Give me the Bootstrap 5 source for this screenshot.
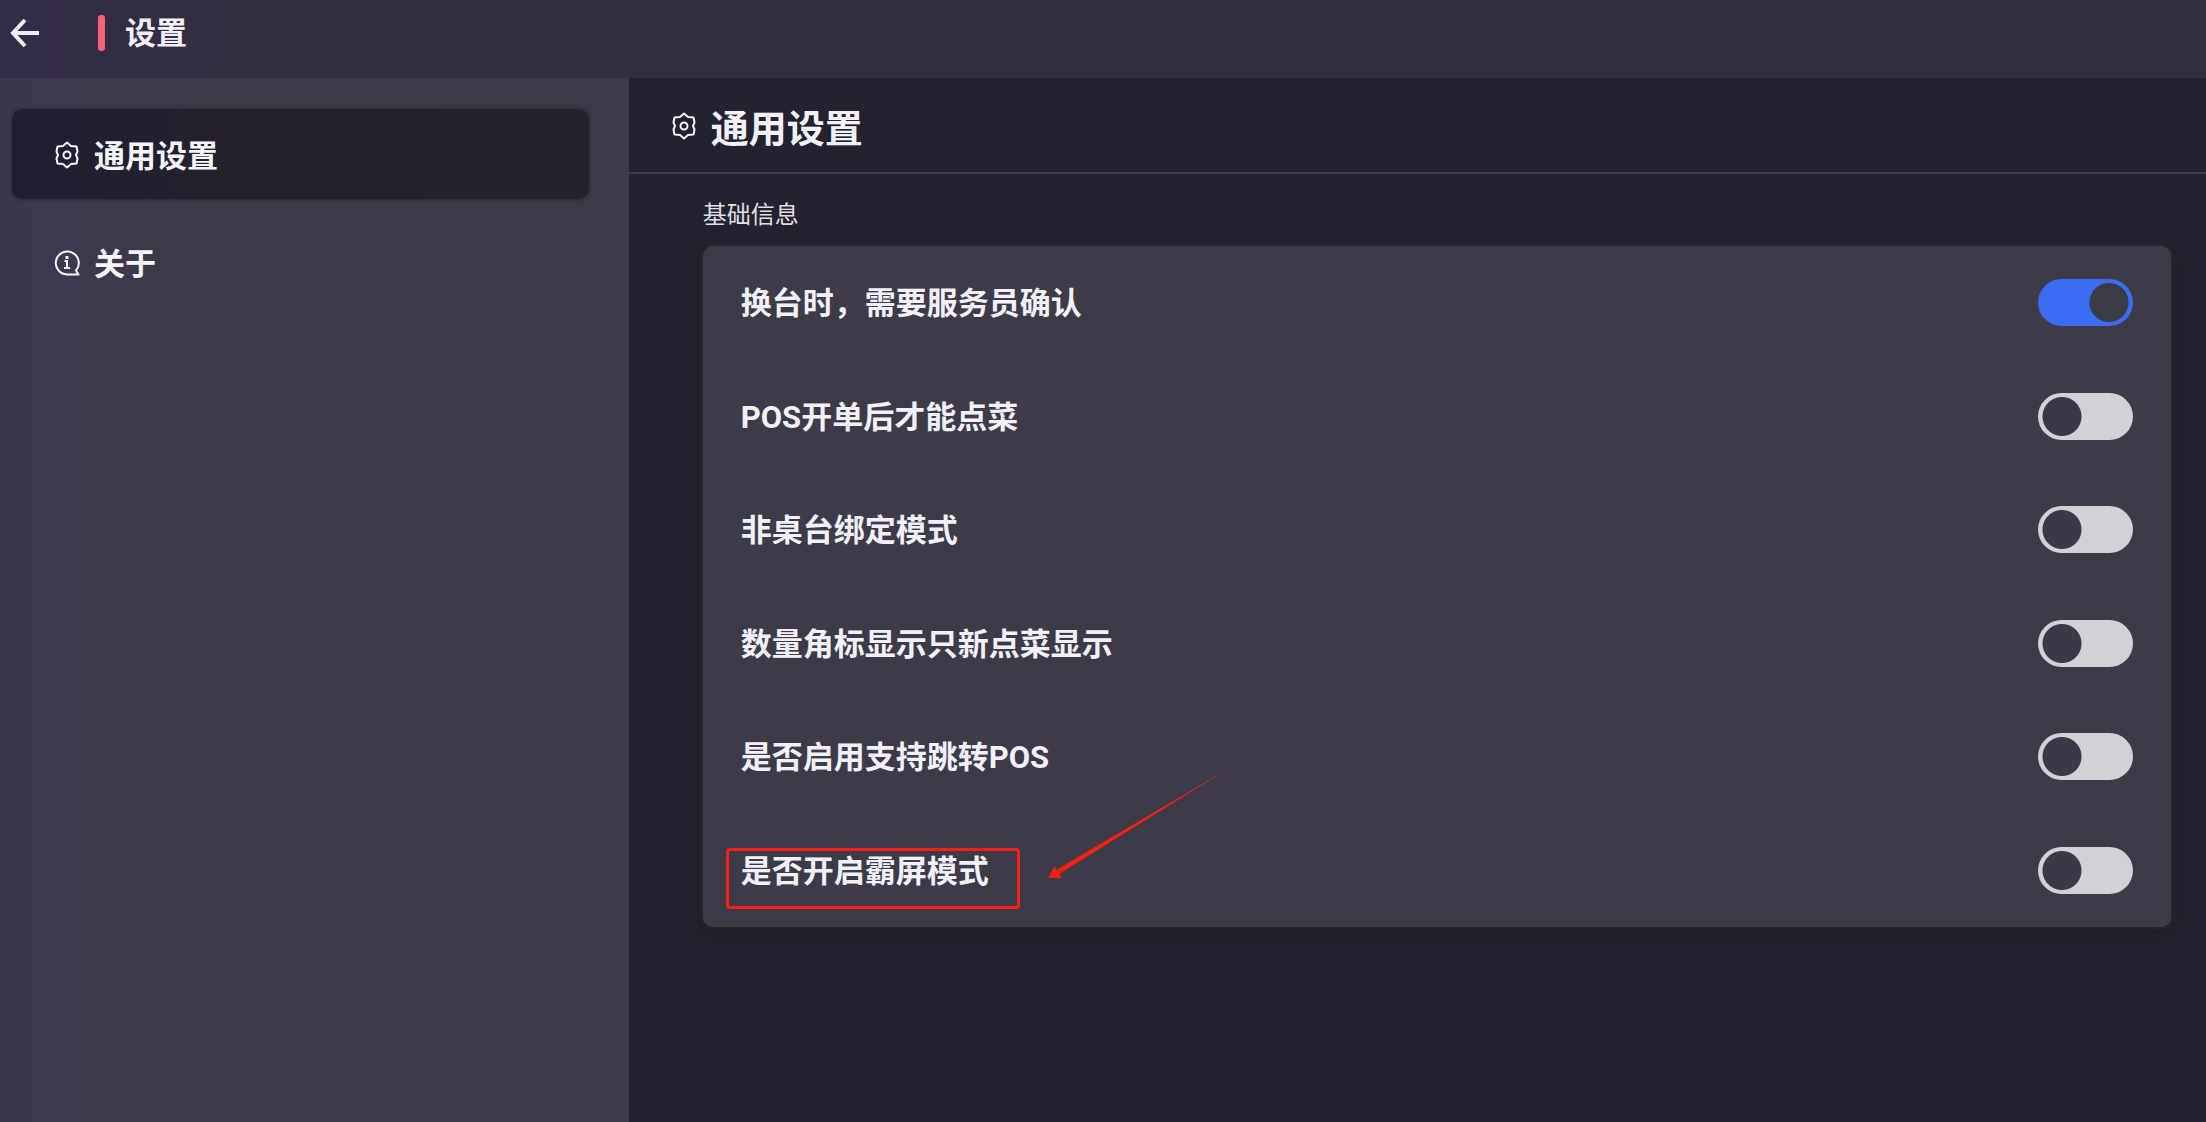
<!DOCTYPE html>
<html lang="zh-CN">
<head>
<meta charset="utf-8">
<meta name="viewport" content="width=device-width, initial-scale=1">
<title>设置</title>
<link href="https://cdn.jsdelivr.net/npm/bootstrap@5.3.0/dist/css/bootstrap.min.css" rel="stylesheet">
<style>
  body { font-family: Roboto, "Noto Sans CJK SC", sans-serif; background: #22232e; color: #f2f1fb; }
  .topbar { height: 78px; background: linear-gradient(90deg, #332c46 0, #322e3e 280px, #322e3e 100%); padding: 0 7px 12px; }
  .back-btn { width: 36px; height: 48px; color: #eeebfb; }
  .title-accent { width: 7px; height: 36px; border-radius: 3px; background: #f9607a; margin-left: 55px; }
  .page-title { font-size: 31px; line-height: 46px; margin-left: 20px; padding-top: 2px; }
  .side-menu { flex: 0 0 28.5%; background: linear-gradient(90deg, #3d374e 0, #3e394a 110px, #3c3a47 200px, #3c3a47 100%); padding: 31px 40px 0 12px; }
  .side-link { height: 90px; padding: 5px 0 0 41px; gap: 13px; border-radius: 10px; font-size: 31px; line-height: 46px; color: #f6f5fc; margin-bottom: 18px; }
  .side-link.active { background: linear-gradient(90deg, #221d34 0, #22212d 160px, #22232d 100%); box-shadow: 0 0 4px #22222c; }
  .side-link svg, .panel-head svg { width: 28px; height: 28px; flex: none; margin-bottom: 4px; }
  .panel-head { height: 96px; padding: 6px 0 0 41px; gap: 13px; border-bottom: 2px solid #413f4d; }
  .panel-title { font-size: 38px; line-height: 56px; padding-top: 2px; }
  .panel-body { padding: 23px 35px 0 74px; }
  .group-title { font-size: 24px; line-height: 36px; margin-bottom: 13px; color: #e0dfe8; }
  .option-card { grid-template-rows: repeat(3, 113px 114px); background: #3d3b48; border-radius: 10px; padding: 0 38px; box-shadow: 0 0 5px #302f3b, 0 6px 14px #20202a; }
  .option-text { font-size: 31px; line-height: 46px; padding-top: 3px; }
  .option-card .form-switch { min-height: 0; }
  .option-card .form-check-input { width: 95px; height: 47px; border: 0; background: radial-gradient(circle at 24px 50%, #3b3948 19px, transparent 20px) #d1d2d6; }
  .option-card .form-check-input:checked { background: radial-gradient(circle at 71px 50%, #3b3b45 19px, transparent 20px) #3a6cf6; }
  .mark-box { top: 2px; bottom: -14px; left: -15px; right: -31px; border: 3px solid #ff1e12; border-radius: 4px; }
  .mark-arrow { left: 100%; bottom: 16px; margin-left: 56px; width: 184px; height: 112px; }
</style>
<script src="https://cdn.jsdelivr.net/npm/bootstrap@5.3.0/dist/js/bootstrap.bundle.min.js" defer></script>
</head>
<body class="d-flex flex-column min-vh-100">
<svg class="d-none" aria-hidden="true">
  <symbol id="gear" viewBox="0 0 28 28">
    <g fill="none" stroke="currentColor" stroke-width="2" stroke-linejoin="round">
      <path d="M14 1.500 18 5l5.500.500 1 5L23 14l1.500 3.500-1 5L18 23l-4 3.500L10 23l-5.500-.500-1-5L5 14l-1.500-3.500 1-5L10 5z"/>
      <circle cx="14" cy="14" r="3.500"/>
    </g>
  </symbol>
</svg>

<header class="topbar d-flex align-items-center">
  <button type="button" class="btn border-0 p-0 back-btn" aria-label="返回">
    <svg width="34" height="34" viewBox="0 0 34 34" fill="none" stroke="currentColor" stroke-width="4"><path d="M17 4 5 17l12 13M5 17h26"/></svg>
  </button>
  <span class="title-accent"></span>
  <h1 class="page-title fw-bold mb-0">设置</h1>
</header>

<div class="d-flex flex-grow-1">
  <nav class="side-menu d-flex flex-column">
    <a href="#general" class="side-link active d-flex align-items-center fw-bold text-decoration-none" aria-current="page">
      <svg><use href="#gear"/></svg>通用设置
    </a>
    <a href="#about" class="side-link d-flex align-items-center fw-bold text-decoration-none">
      <svg viewBox="0 0 28 28" fill="none" stroke="currentColor" stroke-width="2"><path d="M23 21.500A11.500 11.500 0 1 0 14 25.500h11.500z" stroke-linejoin="round"/><path d="M11.500 12H14v7m-3 0h6" /><path d="M14 7v3" stroke-width="3"/></svg>关于
    </a>
  </nav>

  <main class="flex-grow-1" id="general">
    <div class="panel-head d-flex align-items-center">
      <svg><use href="#gear"/></svg>
      <h2 class="panel-title fw-bold mb-0">通用设置</h2>
    </div>
    <div class="panel-body">
      <h3 class="group-title fw-normal">基础信息</h3>
      <div class="option-card d-grid">
        <div class="d-flex align-items-center justify-content-between">
          <label class="option-text fw-bold" for="opt1">换台时，需要服务员确认</label>
          <div class="form-switch p-0 d-flex"><input class="form-check-input m-0" type="checkbox" role="switch" id="opt1" checked></div>
        </div>
        <div class="d-flex align-items-center justify-content-between">
          <label class="option-text fw-bold" for="opt2">POS开单后才能点菜</label>
          <div class="form-switch p-0 d-flex"><input class="form-check-input m-0" type="checkbox" role="switch" id="opt2"></div>
        </div>
        <div class="d-flex align-items-center justify-content-between">
          <label class="option-text fw-bold" for="opt3">非桌台绑定模式</label>
          <div class="form-switch p-0 d-flex"><input class="form-check-input m-0" type="checkbox" role="switch" id="opt3"></div>
        </div>
        <div class="d-flex align-items-center justify-content-between">
          <label class="option-text fw-bold" for="opt4">数量角标显示只新点菜显示</label>
          <div class="form-switch p-0 d-flex"><input class="form-check-input m-0" type="checkbox" role="switch" id="opt4"></div>
        </div>
        <div class="d-flex align-items-center justify-content-between">
          <label class="option-text fw-bold" for="opt5">是否启用支持跳转POS</label>
          <div class="form-switch p-0 d-flex"><input class="form-check-input m-0" type="checkbox" role="switch" id="opt5"></div>
        </div>
        <div class="d-flex align-items-center justify-content-between">
          <div class="position-relative">
            <label class="option-text fw-bold" for="opt6">是否开启霸屏模式</label>
            <span class="mark-box position-absolute"></span>
            <svg class="mark-arrow position-absolute" viewBox="0 0 184 112" fill="#ff1e12"><path d="M3 111 10 99 11 103 181 3 14 107 17 111z"/></svg>
          </div>
          <div class="form-switch p-0 d-flex"><input class="form-check-input m-0" type="checkbox" role="switch" id="opt6"></div>
        </div>
      </div>
    </div>
  </main>
</div>
</body>
</html>
